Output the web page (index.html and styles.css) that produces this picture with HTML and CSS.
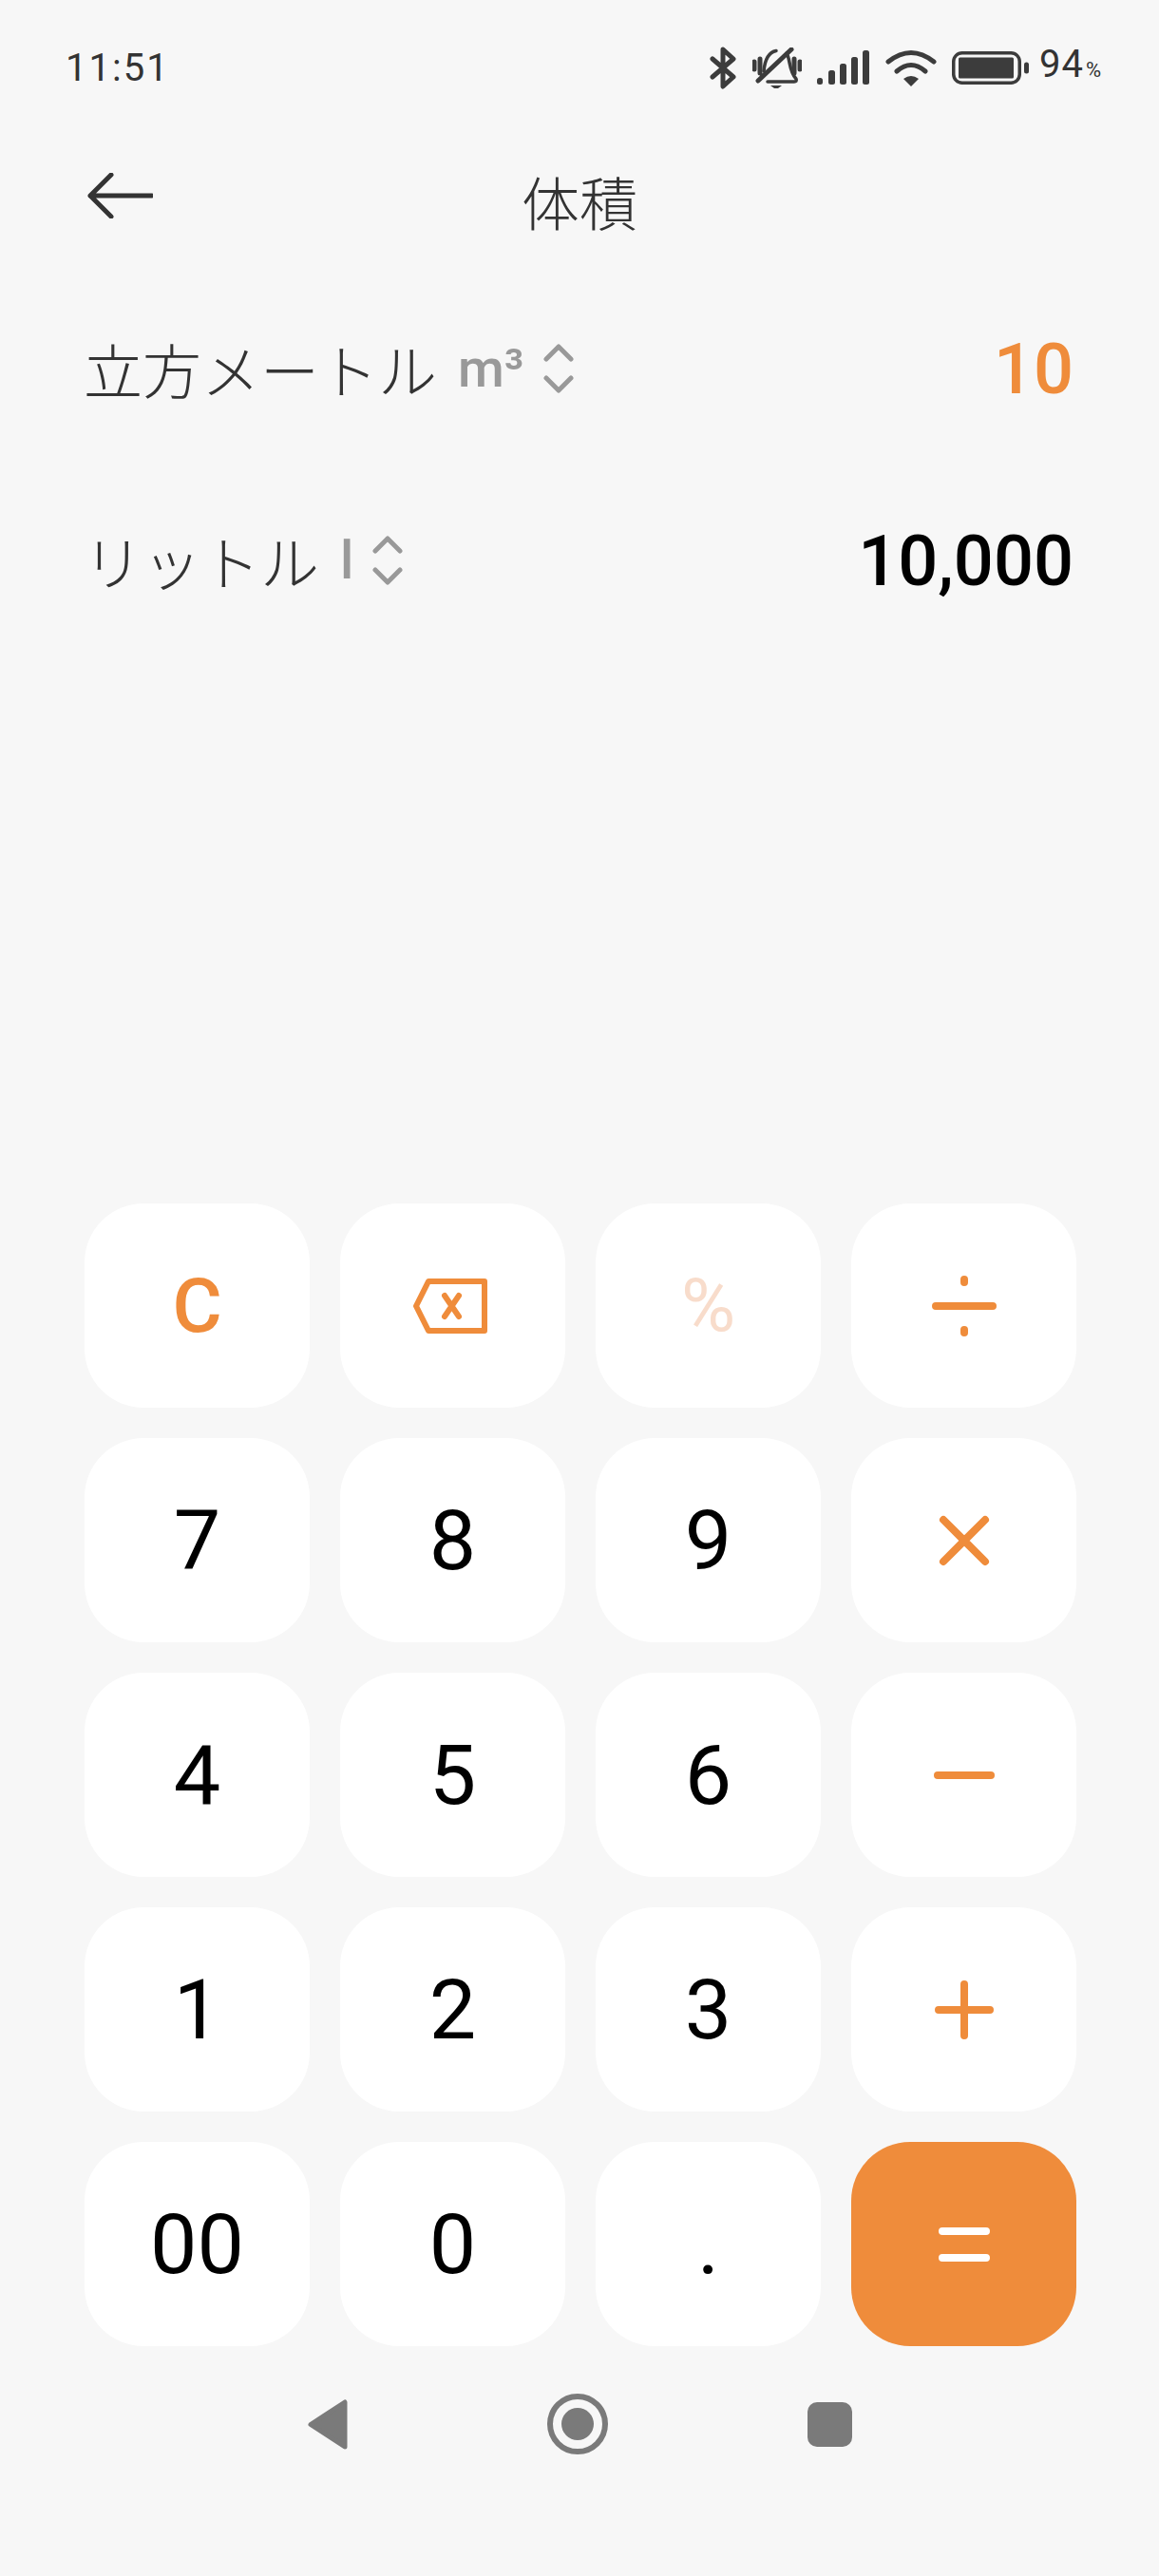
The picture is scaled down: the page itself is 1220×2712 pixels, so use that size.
FILE: index.html
```html
<!DOCTYPE html>
<html lang="ja">
<head>
    <meta charset="UTF-8">
    <meta name="viewport" content="width=device-width, initial-scale=1.0">
    <title>体積</title>
    <link rel="stylesheet" href="styles.css">
</head>
<body>
    <div class="page">
        <!-- status bar -->
        <div class="status">
            <span class="time">11:51</span>
            <div class="status-icons">
                <svg class="ic-bt" viewBox="0 0 29 45"><path d="M3 13L25 32L14 42V3L25 13L3 32"/></svg>
                <svg class="ic-bell" viewBox="0 0 52 43">
                    <path d="M6 35L41 2M2 15V23M8 12V27M50 15V23M44 12V27"/>
                    <path class="thin" d="M12 25C13 14 17 5 25 3.500M36 6C40 12 38 24 46 33C47 35 46 36 44 36H16"/>
                    <path class="fill" d="M19 40H31L27 43H23Z"/>
                </svg>
                <svg class="ic-signal" viewBox="0 0 56 36">
                    <rect x="0" y="29" width="6" height="7" rx="2.500"/>
                    <rect x="12" y="21" width="7" height="15" rx="2.500"/>
                    <rect x="24" y="14" width="7" height="22" rx="2.500"/>
                    <rect x="36" y="7" width="7" height="29" rx="2.500"/>
                    <rect x="48" y="0" width="7" height="36" rx="2.500"/>
                </svg>
                <svg class="ic-wifi" viewBox="0 0 54 39">
                    <path d="M3 13Q27 -6 51 13M12 23Q27 10 42 23"/>
                    <path class="fill" d="M19 31Q27 25 35 31L27 39Z"/>
                </svg>
                <svg class="ic-battery" viewBox="0 0 81 35">
                    <rect class="thin" x="1.750" y="1.750" width="69.500" height="31.500" rx="9"/>
                    <rect class="fill" x="7" y="6.500" width="58" height="22" rx="1.500"/>
                    <rect class="fill" x="76" y="11.500" width="5" height="12" rx="2.500"/>
                </svg>
                <span class="level">94<small>%</small></span>
            </div>
        </div>

        <!-- title -->
        <div class="header">
            <svg class="back" viewBox="0 0 69 48"><path d="M25 2L3 24L25 46M3 24H68"/></svg>
            <h1>体積</h1>
        </div>

        <!-- conversion rows -->
        <div class="row row-first">
            <div class="unit">
                <span class="name">立方メートル</span>
                <span class="abbr">m³</span>
                <svg class="updown" viewBox="0 0 32 52"><path d="M3 16L16 3L29 16M3 36L16 49L29 36"/></svg>
            </div>
            <span class="value active">10</span>
        </div>
        <div class="row">
            <div class="unit">
                <span class="name">リットル</span>
                <span class="abbr">l</span>
                <svg class="updown" viewBox="0 0 32 52"><path d="M3 16L16 3L29 16M3 36L16 49L29 36"/></svg>
            </div>
            <span class="value">10,000</span>
        </div>

        <!-- keypad -->
        <div class="keypad">
            <div class="key op"><span class="clear">C</span></div>
            <div class="key op">
                <svg class="ic-del" viewBox="0 0 78 58"><path d="M3 29L16 3H75V55H16ZM33 18L48 40M48 18L33 40"/></svg>
            </div>
            <div class="key"><span class="percent">%</span></div>
            <div class="key op">
                <svg class="ic-op" viewBox="0 0 68 68"><path d="M4 34H64M34 6V9M34 59V62"/></svg>
            </div>

            <div class="key">7</div>
            <div class="key">8</div>
            <div class="key">9</div>
            <div class="key op">
                <svg class="ic-op" viewBox="0 0 68 68"><path d="M12 12L56 56M56 12L12 56"/></svg>
            </div>

            <div class="key">4</div>
            <div class="key">5</div>
            <div class="key">6</div>
            <div class="key op">
                <svg class="ic-op" viewBox="0 0 68 68"><path d="M6 34H62"/></svg>
            </div>

            <div class="key">1</div>
            <div class="key">2</div>
            <div class="key">3</div>
            <div class="key op">
                <svg class="ic-op" viewBox="0 0 68 68"><path d="M7 34H61M34 7V61"/></svg>
            </div>

            <div class="key">00</div>
            <div class="key">0</div>
            <div class="key">.</div>
            <div class="key equals">
                <svg class="ic-op" viewBox="0 0 68 68"><path d="M11 20H57M11 48H57"/></svg>
            </div>
        </div>

        <!-- navigation bar -->
        <div class="nav">
            <svg class="nav-back" viewBox="0 0 42 53"><path d="M39 3V50L3 26.500Z"/></svg>
            <svg class="nav-home" viewBox="0 0 64 64"><circle class="ring" cx="32" cy="32" r="29"/><circle cx="32" cy="32" r="17"/></svg>
            <div class="nav-recent"></div>
        </div>
    </div>
</body>
</html>
```

FILE: styles.css
```css
* {
    margin: 0;
    padding: 0;
    box-sizing: border-box;
}

body {
    background-color: #f7f7f7;
    font-family: Roboto, "Noto Sans CJK JP", sans-serif;
    overflow: hidden;
}

.page {
    display: flex;
    flex-direction: column;
    height: 2712px;
}

/* status bar */
.status {
    display: flex;
    align-items: center;
    justify-content: space-between;
    height: 142px;
    padding: 0 60px 0 69px;
    color: #333;
}

.time {
    font-size: 40px;
    letter-spacing: 2px;
}

.status-icons {
    display: flex;
    align-items: center;
    gap: 16px;
}

.status-icons svg {
    fill: none;
    stroke: #3c3c3c;
    stroke-width: 5;
    stroke-linecap: round;
    stroke-linejoin: round;
}

.status-icons .fill {
    fill: #3c3c3c;
    stroke: none;
}

.status-icons .thin {
    stroke-width: 3.500;
}

.ic-bt {
    width: 29px;
    height: 45px;
}

.ic-bell {
    width: 52px;
    height: 43px;
}

.ic-signal {
    width: 56px;
    height: 36px;
}

.status-icons .ic-signal {
    fill: #3c3c3c;
    stroke: none;
}

.ic-wifi {
    width: 54px;
    height: 39px;
}

.ic-battery {
    width: 81px;
    height: 35px;
}

.level {
    font-size: 40px;
    line-height: 40px;
    margin-left: -5px;
    letter-spacing: 1px;
}

.level small {
    font-size: 22px;
    margin-left: 2px;
}

/* title */
.header {
    display: grid;
    grid-template-columns: 1fr auto 1fr;
    align-items: center;
    height: 138px;
    padding-left: 92px;
}

.back {
    width: 69px;
    height: 48px;
    margin-top: -10px;
    fill: none;
    stroke: #333;
    stroke-width: 5;
    stroke-linecap: round;
    stroke-linejoin: round;
}

h1 {
    font-size: 61px;
    font-weight: 300;
    color: #333;
    margin-left: -92px;
}

/* rows */
.row {
    display: flex;
    align-items: center;
    justify-content: space-between;
    height: 100px;
    padding: 0 90px 0 88px;
}

.row-first {
    margin-top: 58px;
    margin-bottom: 102px;
}

.unit {
    display: flex;
    align-items: center;
}

.name {
    font-size: 62px;
    font-weight: 300;
    color: #333;
}

.abbr {
    font-size: 56px;
    font-weight: 500;
    color: #999;
    margin-left: 22px;
}

.updown {
    width: 32px;
    height: 52px;
    margin-left: 20px;
    fill: none;
    stroke: #999;
    stroke-width: 5;
    stroke-linecap: round;
    stroke-linejoin: round;
}

.value {
    font-size: 74px;
    font-weight: 500;
    color: #000;
}

.value.active {
    color: #ef8c3b;
}

/* keypad */
.keypad {
    display: grid;
    grid-template-columns: repeat(4, 237px);
    grid-auto-rows: 215px;
    gap: 32px;
    margin-top: auto;
    padding-left: 89px;
}

.key {
    display: flex;
    align-items: center;
    justify-content: center;
    background-color: #fff;
    border-radius: 62px;
    font-size: 88px;
    color: #000;
}

.key.op {
    color: #ef8c3b;
}

.key.equals {
    background-color: #ef8c3b;
}

.clear {
    font-size: 80px;
    font-weight: 500;
}

.percent {
    font-size: 78px;
    color: #f8dccb;
}

.ic-op {
    width: 68px;
    height: 68px;
    fill: none;
    stroke: #ef8c3b;
    stroke-width: 8;
    stroke-linecap: round;
}

.equals .ic-op {
    stroke: #fff;
}

.ic-del {
    width: 78px;
    height: 58px;
    margin-left: -5px;
    fill: none;
    stroke: #ef8c3b;
    stroke-width: 6;
    stroke-linecap: round;
    stroke-linejoin: round;
}

/* navigation bar */
.nav {
    display: flex;
    align-items: center;
    justify-content: center;
    gap: 210px;
    height: 242px;
    padding-bottom: 78px;
}

.nav-back {
    width: 42px;
    height: 53px;
    fill: #7a7a7a;
    stroke: #7a7a7a;
    stroke-width: 5;
    stroke-linejoin: round;
}

.nav-home {
    width: 64px;
    height: 64px;
    fill: #7a7a7a;
}

.nav-home .ring {
    fill: none;
    stroke: #7a7a7a;
    stroke-width: 6;
}

.nav-recent {
    width: 47px;
    height: 47px;
    background-color: #7a7a7a;
    border-radius: 10px;
}
```
